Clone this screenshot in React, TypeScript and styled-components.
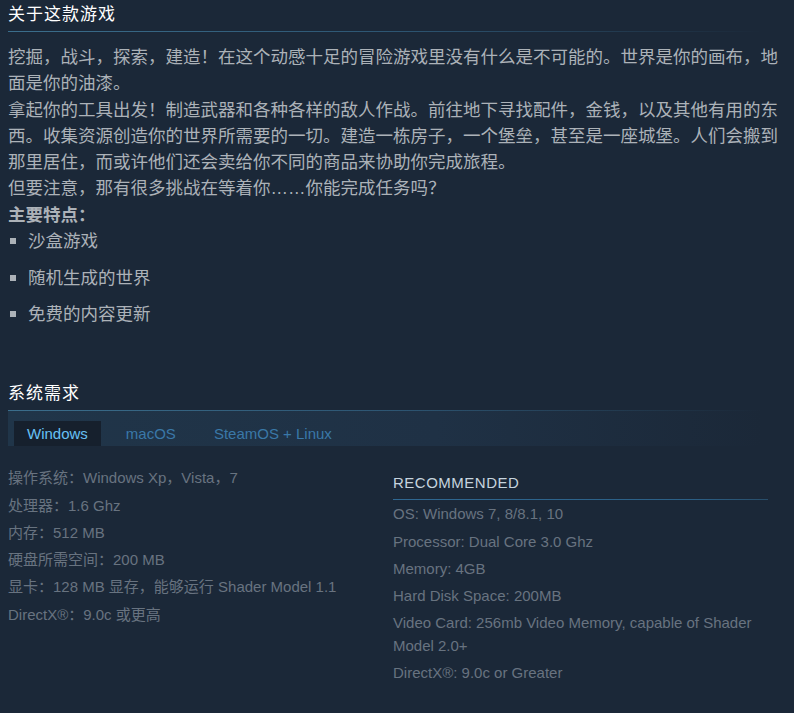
import React from 'react';
import styled, { createGlobalStyle } from 'styled-components';

const GlobalStyle = createGlobalStyle`
    html, body {
        margin: 0;
        padding: 0;
        background: #1b2838;
    }
    body {
        font-family: "Liberation Sans", "Noto Sans CJK SC", sans-serif;
        min-height: 100vh;
    }
`;

const Page = styled.div`
    padding: 0 8px;
    background: #1b2838;
    min-height: 713px;
    box-sizing: border-box;
`;

const Section = styled.section<{ $gapTop?: number }>`
    margin-top: ${p => p.$gapTop || 0}px;
`;

const SectionTitle = styled.h2`
    margin: 0;
    padding: 2px 0 0;
    font-size: 17px;
    font-weight: normal;
    line-height: 26px;
    letter-spacing: 1px;
    color: #ffffff;
    &::after {
        content: '';
        display: block;
        height: 1px;
        margin-top: 3px;
        background: linear-gradient(to right, #3b6e8c 0%, #2d5572 50%, rgba(27, 40, 56, 0) 97%);
    }
`;

const Description = styled.div`
    margin-top: 12px;
    font-size: 17.5px;
    line-height: 26.25px;
    color: #acb2b8;
    strong {
        font-weight: bold;
    }
`;

const FeatureList = styled.ul`
    list-style: none;
    margin: 0;
    padding: 0;
`;

const FeatureItem = styled.li`
    position: relative;
    padding-left: 20px;
    margin-bottom: 10.5px;
    &::before {
        content: '';
        position: absolute;
        left: 2px;
        top: 10px;
        width: 6px;
        height: 6px;
        background: #acb2b8;
    }
`;

const TabStrip = styled.div`
    display: flex;
    gap: 12px;
    height: 35px;
    box-sizing: border-box;
    padding: 10px 0 0 6px;
    background: linear-gradient(to right, #203549 0%, #1f3145 55%, rgba(27, 40, 56, 0) 97%);
`;

const Tab = styled.div<{ $active?: boolean }>`
    height: 25px;
    padding: 0 13px;
    font-size: 15px;
    line-height: 26px;
    color: ${p => (p.$active ? '#67c1f5' : '#3a78a8')};
    background: ${p => (p.$active ? '#16202d' : 'transparent')};
    cursor: pointer;
`;

const ReqColumns = styled.div`
    display: grid;
    grid-template-columns: 375px 375px;
    column-gap: 10px;
    padding-top: 21.75px;
`;

const ReqColumn = styled.div``;

const ReqHeading = styled.h4`
    margin: 7px 0 3px;
    font-size: 15px;
    font-weight: normal;
    line-height: 18px;
    letter-spacing: 0.5px;
    text-transform: uppercase;
    color: #c6d4df;
    &::after {
        content: '';
        display: block;
        height: 1px;
        margin-top: 7px;
        background: linear-gradient(to right, #2f6892 0%, #2b5f85 80%, #284d69 100%);
    }
`;

const ReqList = styled.ul`
    list-style: none;
    margin: 0;
    padding: 0;
`;

const ReqItem = styled.li`
    font-size: 15px;
    line-height: 22.5px;
    margin-bottom: 4.75px;
    color: #687380;
`;

const features = ['沙盒游戏', '随机生成的世界', '免费的内容更新'];
const tabs = ['Windows', 'macOS', 'SteamOS + Linux'];

const minimum = [
    '操作系统：Windows Xp，Vista，7',
    '处理器：1.6 Ghz',
    '内存：512 MB',
    '硬盘所需空间：200 MB',
    '显卡：128 MB 显存，能够运行 Shader Model 1.1',
    'DirectX®：9.0c 或更高',
];

const recommended = [
    'OS: Windows 7, 8/8.1, 10',
    'Processor: Dual Core 3.0 Ghz',
    'Memory: 4GB',
    'Hard Disk Space: 200MB',
    'Video Card: 256mb Video Memory, capable of Shader Model 2.0+',
    'DirectX®: 9.0c or Greater',
];

export default function App() {
    return (
        <Page>
            <GlobalStyle />
            <Section>
                <SectionTitle>关于这款游戏</SectionTitle>
                <Description>
                    挖掘，战斗，探索，建造！在这个动感十足的冒险游戏里没有什么是不可能的。世界是你的画布，地面是你的油漆。
                    <br />
                    拿起你的工具出发！制造武器和各种各样的敌人作战。前往地下寻找配件，金钱，以及其他有用的东西。收集资源创造你的世界所需要的一切。建造一栋房子，一个堡垒，甚至是一座城堡。人们会搬到那里居住，而或许他们还会卖给你不同的商品来协助你完成旅程。
                    <br />
                    但要注意，那有很多挑战在等着你……你能完成任务吗？
                    <br />
                    <strong>主要特点：</strong>
                    <FeatureList>
                        {features.map(f => (
                            <FeatureItem key={f}>{f}</FeatureItem>
                        ))}
                    </FeatureList>
                </Description>
            </Section>
            <Section $gapTop={51}>
                <SectionTitle>系统需求</SectionTitle>
                <TabStrip>
                    {tabs.map((t, i) => (
                        <Tab key={t} $active={i === 0}>{t}</Tab>
                    ))}
                </TabStrip>
                <ReqColumns>
                    <ReqColumn>
                        <ReqList>
                            {minimum.map(m => (
                                <ReqItem key={m}>{m}</ReqItem>
                            ))}
                        </ReqList>
                    </ReqColumn>
                    <ReqColumn>
                        <ReqHeading>Recommended</ReqHeading>
                        <ReqList>
                            {recommended.map(r => (
                                <ReqItem key={r}>{r}</ReqItem>
                            ))}
                        </ReqList>
                    </ReqColumn>
                </ReqColumns>
            </Section>
        </Page>
    );
}
